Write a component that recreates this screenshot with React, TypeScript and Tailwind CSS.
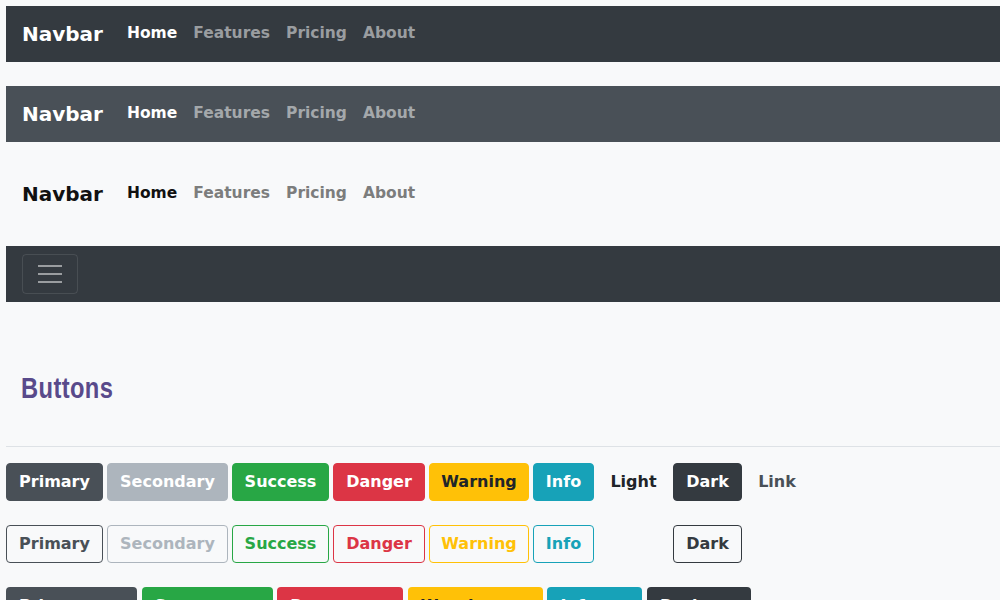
import React from "react";

const F = { fontFamily: '"DejaVu Sans", "Liberation Sans", sans-serif' };

function Navbar({ variant }: { variant: "dark" | "primary" | "light" }) {
  const bg =
    variant === "dark" ? "bg-[#343a40]" : variant === "primary" ? "bg-[#495057]" : "bg-transparent";
  const brand = variant === "light" ? "text-[#111]" : "text-white";
  const active = variant === "light" ? "text-[#111]" : "text-white";
  const muted =
    variant === "light" ? "text-[#7c7d7d]" : variant === "primary" ? "text-[#a4a8ab]" : "text-[#9a9da0]";
  return (
    <nav className={`flex h-[56px] items-center px-4 ${bg}`}>
      <span className={`mr-4 text-[20px] font-bold leading-[30px] ${brand}`}>Navbar</span>
      <div className="flex items-center">
        <span className={`px-2 text-[15.5px] font-bold ${active}`}>Home</span>
        <span className={`px-2 text-[15.5px] font-bold ${muted}`}>Features</span>
        <span className={`px-2 text-[15.5px] font-bold ${muted}`}>Pricing</span>
        <span className={`px-2 text-[15.5px] font-bold ${muted}`}>About</span>
      </div>
    </nav>
  );
}

const solid = [
  { l: "Primary", w: "w-[97px]", c: "bg-[#495057] border-[#495057] text-white" },
  { l: "Secondary", w: "w-[121px]", c: "bg-[#adb5bd] border-[#adb5bd] text-white" },
  { l: "Success", w: "w-[97px]", c: "bg-[#28a745] border-[#28a745] text-white" },
  { l: "Danger", w: "w-[92px]", c: "bg-[#dc3545] border-[#dc3545] text-white" },
  { l: "Warning", w: "w-[100px]", c: "bg-[#ffc107] border-[#ffc107] text-[#212529]" },
  { l: "Info", w: "w-[61px]", c: "bg-[#17a2b8] border-[#17a2b8] text-white" },
  { l: "Light", w: "w-[71px]", c: "bg-[#f8f9fa] border-[#f8f9fa] text-[#212529]" },
  { l: "Dark", w: "w-[69px]", c: "bg-[#343a40] border-[#343a40] text-white" },
  { l: "Link", w: "w-[62px]", c: "bg-transparent border-transparent text-[#495057]" },
];

const outline = [
  { l: "Primary", w: "w-[97px]", c: "border-[#495057] text-[#495057]" },
  { l: "Secondary", w: "w-[121px]", c: "border-[#adb5bd] text-[#adb5bd]" },
  { l: "Success", w: "w-[97px]", c: "border-[#28a745] text-[#28a745]" },
  { l: "Danger", w: "w-[92px]", c: "border-[#dc3545] text-[#dc3545]" },
  { l: "Warning", w: "w-[100px]", c: "border-[#ffc107] text-[#ffc107]" },
  { l: "Info", w: "w-[61px]", c: "border-[#17a2b8] text-[#17a2b8]" },
  { l: "Light", w: "w-[71px]", c: "border-[#f8f9fa] text-[#f8f9fa]" },
  { l: "Dark", w: "w-[69px]", c: "border-[#343a40] text-[#343a40]" },
];

const big = [
  { l: "Primary", w: "w-[131px]", c: "bg-[#495057] text-white" },
  { l: "Success", w: "w-[131px]", c: "bg-[#28a745] text-white" },
  { l: "Danger", w: "w-[126px]", c: "bg-[#dc3545] text-white" },
  { l: "Warning", w: "w-[135px]", c: "bg-[#ffc107] text-[#212529]" },
  { l: "Info", w: "w-[95px]", c: "bg-[#17a2b8] text-white" },
  { l: "Dark", w: "w-[104px]", c: "bg-[#343a40] text-white" },
];

export default function App() {
  return (
    <div className="h-screen overflow-hidden bg-[#f8f9fa] pl-[6px] pt-[6px]" style={F}>
      <div className="flex flex-col gap-6">
        <Navbar variant="dark" />
        <Navbar variant="primary" />
        <Navbar variant="light" />
        <nav className="flex h-[56px] items-center bg-[#343a40] px-4">
          <button className="flex h-[40px] w-[56px] flex-col items-center justify-center gap-[6px] rounded-[4px] border border-white/10">
            <span className="block h-[2px] w-[24px] bg-[#9a9da0]" />
            <span className="block h-[2px] w-[24px] bg-[#9a9da0]" />
            <span className="block h-[2px] w-[24px] bg-[#9a9da0]" />
          </button>
        </nav>
      </div>
      <h1
        className="mt-[68px] pl-[15px] text-[30px] font-bold leading-[36px] text-[#594a8b]"
        style={{ fontFamily: '"Liberation Sans", sans-serif' }}
      >
        <span className="inline-block origin-left scale-x-[0.79] tracking-[0.5px]">Buttons</span>
      </h1>
      <hr className="mt-[40px] border-t border-[#dee2e6]" />
      <div className="mt-4 flex flex-col gap-6">
        <div className="flex gap-1 whitespace-nowrap">
          {solid.map((b) => (
            <button
              key={b.l}
              className={`h-[38px] shrink-0 rounded-[4px] border text-center text-[16px] font-bold leading-[24px] ${b.w} ${b.c}`}
            >
              {b.l}
            </button>
          ))}
        </div>
        <div className="flex gap-1 whitespace-nowrap">
          {outline.map((b) => (
            <button
              key={b.l}
              className={`h-[38px] shrink-0 rounded-[4px] border bg-transparent text-center text-[16px] font-bold leading-[24px] ${b.w} ${b.c}`}
            >
              {b.l}
            </button>
          ))}
        </div>
        <div className="flex gap-[4.6px] whitespace-nowrap">
          {big.map((b) => (
            <button
              key={b.l}
              className={`flex h-[44px] shrink-0 items-start rounded-[4px] pl-[13px] pt-[7px] text-left text-[16px] font-bold leading-[24px] ${b.w} ${b.c}`}
            >
              {b.l}
            </button>
          ))}
        </div>
      </div>
    </div>
  );
}
